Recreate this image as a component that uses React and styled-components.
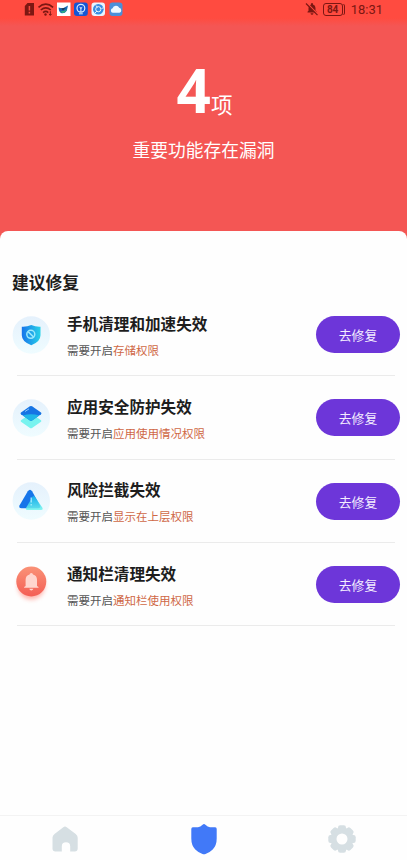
import React from "react";
import styled, { createGlobalStyle } from "styled-components";

const issues = [
  { icon: "clean", title: "手机清理和加速失效", permission: "存储权限" },
  { icon: "layers", title: "应用安全防护失效", permission: "应用使用情况权限" },
  { icon: "risk", title: "风险拦截失效", permission: "显示在上层权限" },
  { icon: "bell", title: "通知栏清理失效", permission: "通知栏使用权限" },
];

const StatusIcons = () => (
  <svg width="100" height="16" viewBox="24 2 100 16">
    <path d="M27.5 3h6.5v12.5h-9.2V6z" fill="#7c1712" />
    <path d="M29.4 6v4.500M29.4 11.8v1.6" stroke="#f5483e" strokeWidth="1.5" />
    <g fill="none" stroke="#7c1712" strokeWidth="1.6">
      <path d="M38.5 7.300q7.300-6.500 14.600 0" />
      <path d="M40.8 10q5-4.300 10 0" />
      <path d="M43.1 12.600q2.700-2.300 5.200 0" />
    </g>
    <circle cx="45.5" cy="14.5" r="1.2" fill="#7c1712" />
    <path d="M50.3 11.200v4M49 13.900l1.300 1.500 1.300-1.500" stroke="#7c1712" fill="none" />
    <rect x="57" y="2.500" width="13.5" height="13.5" fill="#fff" />
    <path d="M58.500 7.500l4 1 5.500-3-1.200 5.200q-2.300 3.300-5.800 2.300-2-1-2.500-5.500z" fill="#176bb5" />
    <path d="M61 8.300l4.500-.3-2.500 2.500z" fill="#173954" />
    <path d="M60 11q4 1 6.800-2-1 4-4.500 4z" fill="#30ae83" />
    <rect x="74" y="2.500" width="13.8" height="13.5" rx="3" fill="#1556d5" />
    <circle cx="80.9" cy="8.3" r="3.9" fill="none" stroke="#d8edff" strokeWidth="1.2" />
    <path d="M80.9 7v5M79 13.800h3.800M79.500 7.300l1.400 1.200 1.400-1.200" stroke="#d8edff" fill="none" />
    <rect x="91.5" y="2.500" width="13.5" height="13.5" rx="3" fill="#e8f4ff" />
    <circle cx="98.3" cy="9.2" r="5.3" fill="#388ce1" />
    <circle cx="98.3" cy="9.2" r="2.6" fill="none" stroke="#e2f3ff" />
    <path d="M96 5.500l1.500 2M101.500 8.500l2-.8M97 11l-2 2" stroke="#e2f3ff" />
    <rect x="109.5" y="2.500" width="13" height="13.5" rx="3" fill="#4b8fd9" />
    <path d="M112.800 12.800a2.300 2.300 0 0 1-.2-4.500 3.500 3.500 0 0 1 6.600-.5 2.600 2.600 0 0 1 .3 5z" fill="#eef8ff" />
  </svg>
);

const MutedBell = () => (
  <svg width="14" height="15" viewBox="0 0 14 15">
    <path d="M2.500 10.500V9.700l1-1V6a3.600 3.600 0 0 1 2.500-3.500V1.200h2v1.300A3.600 3.600 0 0 1 10.500 6v2.700l1.200 1v.8zM5.500 11.300h3q-.2 1.500-1.500 1.500t-1.500-1.500z" fill="#7c1712" />
    <path d="M1.800.9l11 11.300" stroke="#ff4b40" strokeWidth="1.4" />
    <path d="M1 1.500l11.500 11.700" stroke="#7c1712" strokeWidth="1.2" />
  </svg>
);

const IssueIcon = ({ name }) => (
  <svg width="40" height="44" viewBox="0 0 40 44">
    <defs>
      <linearGradient id="disc" x1="0" y1="0" x2="0" y2="1">
        <stop offset="0" stopColor="#e5f1fc" />
        <stop offset="1" stopColor="#effcff" />
      </linearGradient>
      <linearGradient id="shield">
        <stop offset="0" stopColor="#1674eb" />
        <stop offset="1" stopColor="#28d2e8" />
      </linearGradient>
      <linearGradient id="aqua" x1="0" y1="0" x2="0" y2="1">
        <stop offset="0" stopColor="#18b8ed" />
        <stop offset="1" stopColor="#71f6ed" />
      </linearGradient>
      <linearGradient id="coral" x1="0" y1="0" x2="0" y2="1">
        <stop offset="0" stopColor="#fa9277" />
        <stop offset="1" stopColor="#f45e55" />
      </linearGradient>
      <filter id="glow" x="-30%" y="-30%" width="160%" height="160%">
        <feGaussianBlur stdDeviation="2" />
      </filter>
    </defs>
    {name !== "bell" && <circle cx="20.3" cy="22" r="18.7" fill="url(#disc)" />}
    {name === "clean" && (
      <>
        <path d="M10.800 13.800q5 .3 9.500-1.700 4.500 2 9.200 1.700v8.500q0 6.500-9.200 9.900-9.500-3.400-9.500-9.900z" fill="url(#shield)" />
        <circle cx="19.8" cy="21.3" r="4" fill="none" stroke="#9ce9fc" strokeWidth="1.5" />
        <path d="M17.100 18.600l5.400 5.400" stroke="#9ce9fc" strokeWidth="1.5" />
      </>
    )}
    {name === "layers" && (
      <>
        <path d="M10 24.300l9-6.200q1-.7 2 0l9 6.200q.8.700 0 1.400l-9 6.200q-1 .6-2 0l-9-6.200q-.8-.7 0-1.400z" fill="#78f3ef" />
        <path d="M10 16.500l8.900-6.200q1.100-.7 2.200 0l8.900 6.200q1 .9 0 1.700l-8.900 6.200q-1.100.7-2.200 0L10 18.200q-1-.8 0-1.700z" fill="#1674e4" />
        <path d="M11.800 19.500q8.200-2.400 16.400 0l-7.100 4.900q-1.100.7-2.200 0z" fill="#20b6e8" />
        <path d="M14 15.500l4-2.600" stroke="#8bc6fa" strokeWidth="1" />
      </>
    )}
    {name === "risk" && (
      <>
        <path d="M16.800 12.300q2.200-3.200 4.300 0l7.700 14q1.300 3-1.800 3H10.500q-3.200 0-1.900-3z" fill="#1675e9" />
        <path d="M21.500 17.800q1.200-1.600 2.400 0l7.300 10.700q1.400 2.500-1.400 2.500H16.500q-2.500 0-1.200-2.500z" fill="url(#aqua)" opacity=".85" />
        <path d="M20.200 18.500v5M20.200 25v1.400" stroke="#a8edfc" strokeWidth="1.3" />
      </>
    )}
    {name === "bell" && (
      <>
        <circle cx="20.3" cy="23" r="13.5" fill="#ff9083" opacity=".65" filter="url(#glow)" />
        <circle cx="20.3" cy="18.5" r="15" fill="url(#coral)" />
        <path d="M14.600 23v-6.200q0-4.200 4-5.300 0-1.600 1.700-1.600t1.700 1.600q4 1.100 4 5.300V23l1.500 1v.8H13.100V24z" fill="#ffd5ce" />
        <path d="M18.300 25.800h4q-.3 1.700-2 1.700t-2-1.700z" fill="#ffd5ce" />
      </>
    )}
  </svg>
);

const HomeIcon = () => (
  <svg width="28" height="30" viewBox="0 0 28 30">
    <path d="M12.300 3.200q1.700-1.300 3.400 0l9 6.800q2 1.500 2 3.800v10.700q0 3-3 3h-4.500v-5.200q0-4-4.200-4t-4.200 4v5.200H4.500q-3 0-3-3V13.800q0-2.300 2-3.800z" fill="#d6dfe3" />
  </svg>
);

const ShieldIcon = () => (
  <svg width="28" height="32" viewBox="0 0 28 32">
    <path d="M12.600 1.700q1.400-1.200 2.800 0 2.200 2.100 4.600 2.500l5.200.1q1.500.2 1.500 1.700v9.500q0 7-4 11-3.500 3.500-7.200 4.500-1.500.4-3 0-3.700-1-7.200-4.500-4-4-4-11V6q0-1.500 1.500-1.700L8 4.200q2.400-.4 4.600-2.500z" fill="#4179f8" />
  </svg>
);

const GearIcon = () => (
  <svg width="28" height="28" viewBox="0 0 28 28">
    <g fill="#d6dfe3">
      {[0, 45, 90, 135, 180, 225, 270, 315].map((angle) => (
        <rect key={angle} x="10" y=".3" width="8" height="7" rx="2.2" transform={`rotate(${angle} 14 14)`} />
      ))}
    </g>
    <circle cx="14" cy="14" r="8.5" fill="none" stroke="#d6dfe3" strokeWidth="6" />
  </svg>
);

const App = () => {
  return (
    <>
      <GlobalStyle />
      <Screen>
        <Hero>
          <StatusBar>
            <StatusIcons />
            <StatusRight>
              <MutedBell />
              <Battery>84</Battery>
              <Time>18:31</Time>
            </StatusRight>
          </StatusBar>
          <Count>
            <Digit>4</Digit>
            <Unit>项</Unit>
          </Count>
          <Summary>重要功能存在漏洞</Summary>
        </Hero>
        <Sheet>
          <Heading>建议修复</Heading>
          {issues.map((issue) => (
            <Row key={issue.icon}>
              <IssueIcon name={issue.icon} />
              <RowText>
                <RowTitle>{issue.title}</RowTitle>
                <RowHint>
                  需要开启<Permission>{issue.permission}</Permission>
                </RowHint>
              </RowText>
              <FixButton>去修复</FixButton>
            </Row>
          ))}
        </Sheet>
        <TabBar>
          <Tab>
            <HomeIcon />
          </Tab>
          <Tab>
            <ShieldIcon />
          </Tab>
          <Tab>
            <GearIcon />
          </Tab>
        </TabBar>
      </Screen>
    </>
  );
};

const GlobalStyle = createGlobalStyle`
  * {
    box-sizing: border-box;
  }
  body {
    margin: 0;
    font-family: Roboto, "Noto Sans CJK SC", sans-serif;
  }
  svg {
    display: block;
    flex: none;
  }
`;

const Screen = styled.div`
  display: flex;
  flex-direction: column;
  width: 407px;
  height: 860px;
  overflow: hidden;
  background: #f45654;
`;

const Hero = styled.header`
  height: 231px;
  color: #fff;
  text-align: center;
`;

const StatusBar = styled.div`
  display: flex;
  justify-content: space-between;
  height: 26px;
  padding: 2px 24px 0;
  background: linear-gradient(#ff4b40 70%, #f45654);
`;

const StatusRight = styled.div`
  display: flex;
  align-items: center;
  height: 15px;
  color: #7c1712;
`;

const Battery = styled.div`
  width: 20px;
  height: 13px;
  margin: 0 8px 0 4px;
  border: 1px solid #7c1712;
  border-radius: 3px;
  box-shadow: 2px 0 0 -1px #ff4b40, 3px 0 0 -1px #7c1712;
  font-size: 10px;
  font-weight: bold;
  line-height: 11px;
`;

const Time = styled.span`
  font-size: 13px;
  line-height: 16px;
`;

const Count = styled.div`
  display: flex;
  align-items: baseline;
  justify-content: center;
  height: 88px;
  padding: 23px 0 0 2px;
`;

const Digit = styled.span`
  font-family: "Open Sans", sans-serif;
  font-size: 60px;
  font-weight: 700;
  line-height: 82px;
`;

const Unit = styled.span`
  font-size: 21.5px;
`;

const Summary = styled.p`
  margin: 25px 0 0;
  font-size: 17.75px;
  line-height: 24px;
`;

const Sheet = styled.main`
  flex: 1;
  border-radius: 8px 8px 0 0;
  background: #fefefe;
`;

const Heading = styled.h2`
  margin: 0;
  padding: 40px 12px 0;
  height: 62px;
  color: #1d1d1d;
  font-size: 16.8px;
  font-weight: 700;
  line-height: 24px;
`;

const Row = styled.section`
  display: flex;
  align-items: center;
  height: 83.3px;
  padding: 0 7px 0 11px;
  background: linear-gradient(#ebebeb, #ebebeb) 17px 100% / 378px 1px no-repeat;
`;

const RowText = styled.div`
  flex: 1;
  padding: 3px 0 0 16px;
`;

const RowTitle = styled.h3`
  margin: 0;
  color: #1d1d1d;
  font-size: 15.6px;
  font-weight: 700;
  line-height: 30px;
`;

const RowHint = styled.p`
  margin: 0;
  color: #555;
  font-size: 11.5px;
  line-height: 23px;
`;

const Permission = styled.span`
  color: #cf6846;
`;

const FixButton = styled.button`
  width: 84px;
  height: 37px;
  padding: 0;
  border: none;
  border-radius: 19px;
  background: #6d36d9;
  color: #f4edff;
  font-family: inherit;
  font-size: 12.8px;
`;

const TabBar = styled.nav`
  display: flex;
  height: 45px;
  margin: 0 -4.5px;
  border-top: 1px solid #f3f3f3;
  background: #fefefe;
`;

const Tab = styled.div`
  display: flex;
  flex: 1;
  align-items: center;
  justify-content: center;
  padding-top: 1px;
`;

export default App;
